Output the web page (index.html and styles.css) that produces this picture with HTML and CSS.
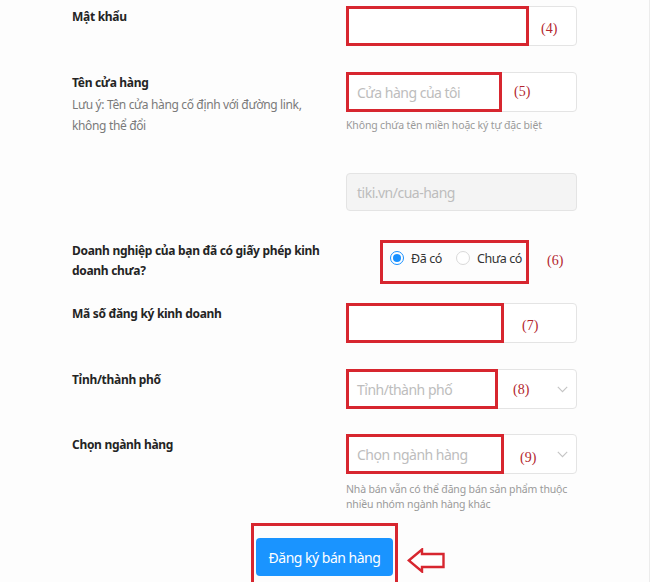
FILE: index.html
```html
<!DOCTYPE html>
<html lang="vi">
<head>
<meta charset="utf-8">
<title>Đăng ký bán hàng</title>
<link rel="stylesheet" href="styles.css">
</head>
<body>
<div class="page">
  <form class="form">
    <div class="row r1">
      <div class="label"><div class="label-title">Mật khẩu</div></div>
      <div class="field">
        <div class="input">
          <span class="hl hl-4"></span>
          <span class="num num-4">(4)</span>
        </div>
      </div>
    </div>

    <div class="row r2">
      <div class="label">
        <div class="label-title">Tên cửa hàng</div>
        <div class="label-note">Lưu ý: Tên cửa hàng cố định với đường link,<br>không thể đổi</div>
      </div>
      <div class="field">
        <div class="input">
          <span class="placeholder">Cửa hàng của tôi</span>
          <span class="hl hl-5"></span>
          <span class="num num-5">(5)</span>
        </div>
        <div class="help help-1">Không chứa tên miền hoặc ký tự đặc biệt</div>
      </div>
    </div>

    <div class="row r3">
      <div class="label"></div>
      <div class="field">
        <div class="input input-disabled">
          <span class="placeholder">tiki.vn/cua-hang</span>
        </div>
      </div>
    </div>

    <div class="row r4">
      <div class="label"><div class="label-title label-two">Doanh nghiệp của bạn đã có giấy phép kinh<br>doanh chưa?</div></div>
      <div class="field field-radio">
        <div class="radio-group">
          <label class="radio"><span class="radio-dot radio-checked"></span><span>Đã có</span></label>
          <label class="radio"><span class="radio-dot"></span><span>Chưa có</span></label>
        </div>
        <span class="hl hl-6"></span>
        <span class="num num-6">(6)</span>
      </div>
    </div>

    <div class="row r5">
      <div class="label"><div class="label-title">Mã số đăng ký kinh doanh</div></div>
      <div class="field">
        <div class="input">
          <span class="hl hl-7"></span>
          <span class="num num-7">(7)</span>
        </div>
      </div>
    </div>

    <div class="row r6">
      <div class="label"><div class="label-title">Tỉnh/thành phố</div></div>
      <div class="field">
        <div class="input input-select">
          <span class="placeholder">Tỉnh/thành phố</span>
          <svg class="chevron" width="11" height="7" viewBox="0 0 11 7"><path d="M0.8 0.8 L5.5 5.6 L10.2 0.8" fill="none" stroke="#c4c4c4" stroke-width="1.1"/></svg>
          <span class="hl hl-8"></span>
          <span class="num num-8">(8)</span>
        </div>
      </div>
    </div>

    <div class="row r7">
      <div class="label"><div class="label-title">Chọn ngành hàng</div></div>
      <div class="field">
        <div class="input input-select">
          <span class="placeholder">Chọn ngành hàng</span>
          <svg class="chevron" width="11" height="7" viewBox="0 0 11 7"><path d="M0.8 0.8 L5.5 5.6 L10.2 0.8" fill="none" stroke="#c4c4c4" stroke-width="1.1"/></svg>
          <span class="hl hl-9"></span>
          <span class="num num-9">(9)</span>
        </div>
        <div class="help help-2">Nhà bán vẫn có thể đăng bán sản phẩm thuộc<br>nhiều nhóm ngành hàng khác</div>
      </div>
    </div>

    <div class="submit-row">
      <div class="submit-wrap">
        <button type="button" class="btn">Đăng ký bán hàng</button>
        <span class="hl hl-btn"></span>
        <svg class="arrow" width="38" height="25" viewBox="0 0 38 25"><polygon points="1.8,12.5 15,1.5 15,6 36.5,6 36.5,19 15,19 15,23.5" fill="#fff" stroke="#d7262f" stroke-width="2.4" stroke-linejoin="miter"/></svg>
      </div>
    </div>
  </form>
</div>
</body>
</html>
```

FILE: styles.css
```css
html, body {
  margin: 0;
  padding: 0;
  background: #fff;
}

body {
  font-family: "Noto Sans", "Open Sans", sans-serif;
  color: #242424;
}

.page {
  width: 649px;
  height: 582px;
  overflow: hidden;
  border-right: 1px solid #ececec;
  background: #fdfdfd;
}

.form {
  padding: 6px 0 0 72px;
}

.row {
  display: grid;
  grid-template-columns: 274px 231px;
}

.r1 { margin-bottom: 26px; }
.r2 { margin-bottom: 37px; }
.r3 { margin-bottom: 30px; }
.r4 { margin-bottom: 22px; }
.r5 { margin-bottom: 26px; }
.r6 { margin-bottom: 25px; }

.label-title {
  font-weight: 700;
  font-size: 12px;
  line-height: 22px;
  letter-spacing: -0.3px;
  color: #242424;
}

.label-two {
  line-height: 20px;
}

.label-note {
  font-size: 12px;
  line-height: 21px;
  letter-spacing: -0.35px;
  color: #7a7a7a;
}

.field {
  position: relative;
}

.input {
  position: relative;
  box-sizing: border-box;
  height: 40px;
  border: 1px solid #e4e4e4;
  border-radius: 4px;
  background: #fff;
  padding: 0 10px;
  display: flex;
  align-items: center;
}

.input-disabled {
  height: 38px;
  background: #f4f4f4;
}

.input-select {
  justify-content: space-between;
  padding-right: 8px;
}

.placeholder {
  font-size: 14px;
  letter-spacing: -0.5px;
  color: #bdbdbd;
  white-space: nowrap;
}

.chevron {
  display: block;
}

.help {
  font-size: 10.5px;
  letter-spacing: -0.15px;
  color: #9a9a9a;
}

.help-1 {
  margin-top: 3px;
  line-height: 20px;
}

.help-2 {
  margin-top: 8px;
  line-height: 15px;
}

/* annotation overlays */
.hl {
  position: absolute;
  top: -1px;
  bottom: -1px;
  left: -1px;
  border: 3px solid #d7262f;
  box-sizing: border-box;
  pointer-events: none;
}

.hl-4 { width: 183px; }
.hl-5 { width: 156px; }
.hl-7 { width: 158px; }
.hl-8 { width: 152px; }
.hl-9 { width: 158px; }

.hl-6 {
  top: -1px;
  bottom: auto;
  left: 34px;
  width: 149px;
  height: 44px;
}

.num {
  position: absolute;
  font-family: "Liberation Serif", "Times New Roman", serif;
  font-size: 14px;
  line-height: 20px;
  color: #b3262d;
}

.num-4 { left: 194px; top: 12px; }
.num-5 { left: 167px; top: 9px; }
.num-6 { left: 201px; top: 10px; }
.num-7 { left: 175px; top: 12px; }
.num-8 { left: 166px; top: 10px; }
.num-9 { left: 173px; top: 13px; }

/* radios */
.field-radio {
  height: 34px;
  display: flex;
  align-items: center;
}

.radio-group {
  display: flex;
  align-items: center;
  gap: 14px;
  margin-left: 44px;
}

.radio {
  display: inline-flex;
  align-items: center;
  gap: 7px;
  font-size: 12.5px;
  letter-spacing: -0.4px;
  color: #333;
}

.radio-dot {
  box-sizing: border-box;
  width: 14px;
  height: 14px;
  border-radius: 50%;
  border: 1px solid #d9d9d9;
  background: #fff;
  position: relative;
}

.radio-checked {
  border-color: #1890ff;
}

.radio-checked::after {
  content: "";
  position: absolute;
  left: 2px;
  top: 2px;
  width: 8px;
  height: 8px;
  border-radius: 50%;
  background: #1890ff;
}

/* submit */
.submit-row {
  width: 505px;
  margin-top: 26px;
  display: flex;
  justify-content: center;
}

.submit-wrap {
  position: relative;
}

.btn {
  display: block;
  width: 137px;
  height: 38px;
  border: none;
  border-radius: 4px;
  background: #1a94ff;
  color: #fff;
  font-family: "Noto Sans", "Open Sans", sans-serif;
  font-size: 14px;
  letter-spacing: -0.5px;
  padding: 0;
}

.hl-btn {
  top: -15px;
  bottom: -10px;
  left: -5px;
  right: -5px;
}

.arrow {
  position: absolute;
  left: 151px;
  top: 10px;
}
```
